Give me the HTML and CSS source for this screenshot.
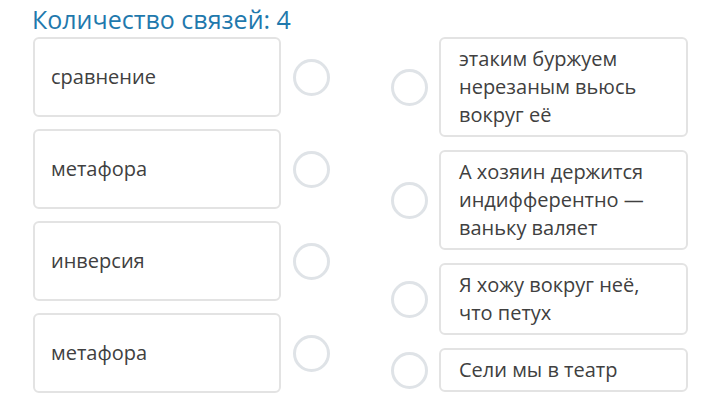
FILE: index.html
```html
<!DOCTYPE html>
<html lang="ru">
<head>
<meta charset="utf-8">
<link rel="stylesheet" href="styles.css">
</head>
<body>
<div class="page">
  <h1 class="title">Количество связей: 4</h1>
  <div class="cols">
    <div class="col left">
      <div class="item"><div class="box">сравнение</div><span class="dot"></span></div>
      <div class="item"><div class="box">метафора</div><span class="dot"></span></div>
      <div class="item"><div class="box">инверсия</div><span class="dot"></span></div>
      <div class="item"><div class="box">метафора</div><span class="dot"></span></div>
    </div>
    <div class="col right">
      <div class="item"><span class="dot"></span><div class="box">этаким буржуем<br>нерезаным вьюсь<br>вокруг её</div></div>
      <div class="item"><span class="dot"></span><div class="box">А хозяин держится<br>индифферентно —<br>ваньку валяет</div></div>
      <div class="item"><span class="dot"></span><div class="box">Я хожу вокруг неё,<br>что петух</div></div>
      <div class="item"><span class="dot"></span><div class="box">Сели мы в театр</div></div>
    </div>
  </div>
</div>
</body>
</html>
```

FILE: styles.css
```css
html, body {
  margin: 0;
  padding: 0;
  background: #ffffff;
}
.page {
  padding: 3px 0 0 32px;
  font-family: "Open Sans", "Liberation Sans", sans-serif;
}
.title {
  margin: 0 0 2px 0;
  font-size: 25px;
  font-weight: 400;
  line-height: 32px;
  color: #1f79ad;
}
.cols {
  display: flex;
  gap: 61px;
  align-items: flex-start;
  padding-left: 1px;
}
.col {
  display: flex;
  flex-direction: column;
}
.left { gap: 12px; }
.right { gap: 13px; }
.item {
  display: flex;
  align-items: center;
  gap: 12px;
}
.right .item { gap: 11px; }
.box {
  box-sizing: border-box;
  border: 2px solid #e3e3e3;
  border-radius: 6px;
  background: #fff;
  color: #404040;
  font-size: 20px;
  line-height: 28px;
}
.left .box {
  width: 248px;
  height: 80px;
  display: flex;
  align-items: center;
  padding: 0 16px;
}
.right .box {
  width: 249px;
  padding: 6px 18px;
}
.dot {
  flex: none;
  box-sizing: border-box;
  width: 37px;
  height: 37px;
  border: 3px solid #dfe3e7;
  border-radius: 50%;
}
```
